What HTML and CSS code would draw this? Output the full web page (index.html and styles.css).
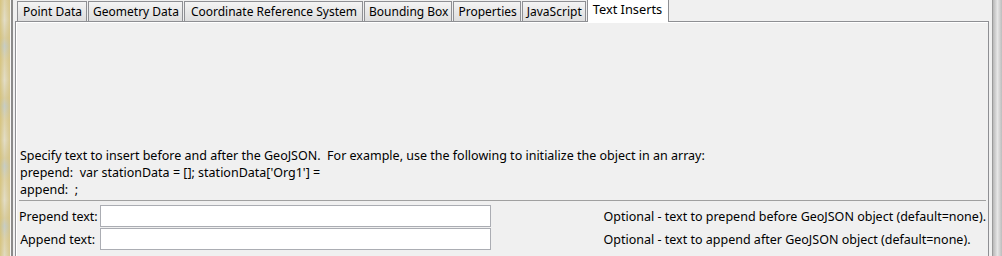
FILE: index.html
```html
<!DOCTYPE html>
<html>
<head>
    <title>Text Inserts</title>
    <meta http-equiv="content-type" content="text/html; charset=UTF-8"/>
    <link rel="stylesheet" href="styles.css">
</head>
<body>
    <div class="win_frame">
        <div class="edge_left"><i class="blur"></i><i class="hl"></i><i class="line"></i><i class="gap"></i></div>
        <div class="tab_main">
            <ul class="tab_bar">
                <li>Point Data</li>
                <li>Geometry Data</li>
                <li>Coordinate Reference System</li>
                <li>Bounding Box</li>
                <li>Properties</li>
                <li>JavaScript</li>
                <li class="current">Text Inserts</li>
            </ul>
            <div class="tab_pane">
                <div class="help_text">
                    <p>Specify text to insert before and after the GeoJSON.&nbsp; For example, use the following to initialize the object in an array:</p>
                    <p>prepend:&nbsp; var stationData = []; stationData['Org1'] =</p>
                    <p>append:&nbsp; ;</p>
                </div>
                <div class="field_list">
                    <label for="prependText">Prepend text:</label>
                    <input type="text" id="prependText">
                    <span>Optional - text to prepend before GeoJSON object (default=none).</span>
                    <label for="appendText">Append text:</label>
                    <input type="text" id="appendText">
                    <span>Optional - text to append after GeoJSON object (default=none).</span>
                </div>
            </div>
        </div>
        <div class="edge_right"><i class="gap"></i><i class="line"></i><i class="bar"></i></div>
    </div>
</body>
</html>
```

FILE: styles.css
```css
html,body{
    margin: 0;
    padding: 0;
    background-color: #f0f0f0;
}
body{
    font-family: "Noto Sans", "Liberation Sans", Arial, sans-serif;
    font-size: 12px;
    color: #000;
}
.win_frame{
    display: flex;
    width: 1002px;
    height: 256px;
    overflow: hidden;
}
/* left window border */
.edge_left{
    display: flex;
    width: 15px;
    flex: none;
}
.edge_left i{
    display: block;
}
.edge_left .blur{
    width: 10px;
    background:
        linear-gradient(90deg, rgba(214,196,128,0.9) 0, rgba(226,222,204,0.6) 45%, rgba(214,198,140,0.9) 100%),
        repeating-linear-gradient(180deg, #d8c27a 0, #e4dcc0 20px, #c9b56c 38px, #9fb4bc 46px, #d8c27a 60px);
}
.edge_left .hl{
    width: 1px;
    background-color: #f7f7f7;
}
.edge_left .line{
    width: 2px;
    background-color: #8a8a8a;
}
.edge_left .gap{
    width: 2px;
    background-color: #f0f0f0;
}
/* tabs */
.tab_main{
    flex: 1;
    display: flex;
    flex-direction: column;
}
.tab_bar{
    list-style: none;
    margin: 0;
    padding: 0 0 0 2px;
    height: 22px;
    box-sizing: border-box;
    border-bottom: 1px solid #8e8f93;
    display: flex;
    align-items: flex-end;
    gap: 1px;
}
.tab_bar li{
    height: 19px;
    line-height: 20px;
    padding: 0 4px 0 5px;
    border: 1px solid #8e8f93;
    border-bottom: none;
    background: linear-gradient(180deg, #f4f4f4 0, #e8e8e8 50%, #dedede 100%);
    white-space: nowrap;
}
.tab_bar li:nth-child(2){padding: 0 3px 0 4px;}
.tab_bar li:nth-child(3){padding: 0 5px 0 6px;}
.tab_bar li:nth-child(4),
.tab_bar li:nth-child(5),
.tab_bar li:nth-child(6){padding: 0 3px 0 4px;}
.tab_bar li.current{
    height: 22px;
    line-height: 19px;
    margin-bottom: -1px;
    padding: 0 6px 0 5px;
    font-size: 12.8px;
    background: #fff;
    position: relative;
}
.tab_pane{
    flex: 1;
    display: flex;
    flex-direction: column;
    justify-content: flex-end;
    border-left: 1px solid #8e8f93;
    border-right: 1px solid #8e8f93;
    box-shadow: inset 1px 1px 0 #fff;
    padding: 0 2px 6px 3px;
    font-size: 12.5px;
}
.help_text{
    padding-left: 1px;
    border-bottom: 1px solid #a0a0a0;
    padding-bottom: 2px;
}
.help_text>p{
    margin: 0;
    line-height: 17px;
    white-space: pre;
}
.field_list{
    display: grid;
    grid-template-columns: 76px 391px 1fr max-content;
    column-gap: 5px;
    row-gap: 1px;
    align-items: center;
    padding-top: 4px;
}
.field_list label{
    grid-column: 1;
    text-align: right;
    white-space: nowrap;
}
.field_list input{
    grid-column: 2;
    height: 22px;
    box-sizing: border-box;
    margin: 0;
    border: 1px solid #abadb3;
    background: #fff;
    font: inherit;
}
.field_list span{
    grid-column: 4;
    white-space: nowrap;
}
/* right window border */
.edge_right{
    display: flex;
    width: 13px;
    flex: none;
}
.edge_right i{
    display: block;
}
.edge_right .gap{
    width: 3px;
    background-color: #f0f0f0;
}
.edge_right .line{
    width: 1px;
    background-color: #9a9a9a;
}
.edge_right .bar{
    width: 9px;
    background:
        linear-gradient(90deg, #b8b8b8 0, #e6e6e6 50%, #bdbdbd 100%);
}
```
